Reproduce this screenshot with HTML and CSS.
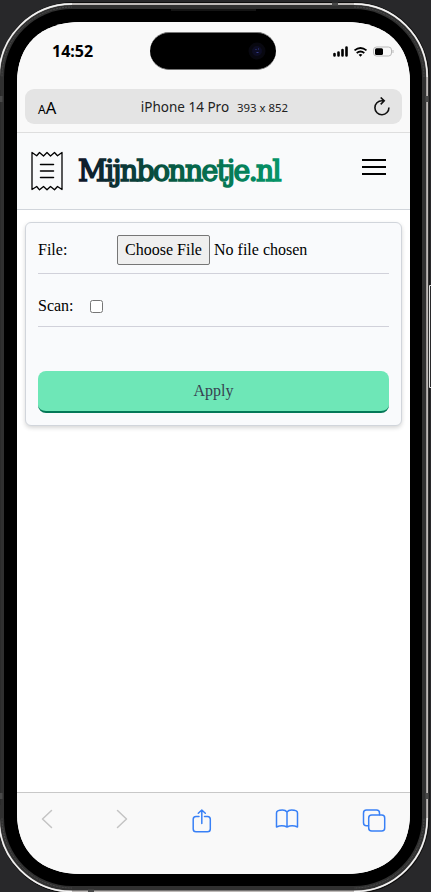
FILE: index.html
```
<!DOCTYPE html>
<html lang="en">
<head>
<meta charset="utf-8">
<title>Mijnbonnetje.nl</title>
<link rel="stylesheet" href="styles.css">
</head>
<body>
<svg class="frame" width="431" height="892" viewBox="0 0 431 892" fill="none" aria-hidden="true">
  <rect x="-2.5" y="2" width="432" height="892" rx="76" fill="#0d0d0d"/>
  <rect x="-1" y="4" width="428.2" height="887.5" rx="73" fill="#303030" stroke="#bdb9b7" stroke-width="2"/>
  <path d="M-1 77A73 73 0 0 1 72 4M354 4A73 73 0 0 1 427.200 77M427.200 818A73 73 0 0 1 354 891.500M72 891.500A73 73 0 0 1-1 818" stroke="#f4f4f4" stroke-width="1.300"/>
  <path d="M0 90V805" stroke="#2b2b2b" stroke-width="6"/>
  <rect x="2" y="7" width="422" height="881" rx="70" stroke="#555" stroke-width=".7" stroke-dasharray="2 1"/>
  <path d="M72 7H354M424 77V818M354 888H72M2 818V77" stroke="#303030" stroke-width="2"/>
  <rect x="4" y="9" width="418" height="877" rx="68" fill="#000"/>
  <path d="M171 10H256" stroke="#292929"/>
  <path d="M332 4H338M88 891H94M427 96V102M427 793V799M1 96V102M1 793V799" stroke="#494949" stroke-width="3"/>
  <path d="M432 285.500H429.500V387.500H432" stroke="#ddd"/>
</svg>
<main class="screen">
  <header class="browser">
    <div class="status">
      <span class="time">14:52</span>
      <span class="island"><svg width="18" height="18" viewBox="0 0 18 18"><circle cx="9" cy="9" r="8.500" fill="#080810"/><circle cx="9" cy="9" r="5" fill="#0d0d24"/><path d="M7.500 7.500h1M10 7h1M8.500 10.500h2" stroke="#343d88" stroke-width="1.100"/></svg></span>
      <svg class="signals" width="62" height="14" viewBox="0 0 62 14" fill="none">
        <path d="M2.500 9v1.500M6.500 7.500v3M10.500 5v5.500M14.500 2.500v8" stroke="#000" stroke-width="2.600" stroke-linecap="round"/>
        <path d="M22.500 5.400Q28.500.600 34.500 5.400M24.700 8Q28.500 4.900 32.300 8" stroke="#000" stroke-width="1.800"/>
        <path d="M26.600 9.700Q28.500 8.300 30.400 9.700L28.500 11.700Z" fill="#000"/>
        <rect x="41.500" y="2" width="18" height="9" rx="3" stroke="#b9b9b9"/>
        <rect x="43" y="3.200" width="8" height="6.700" rx="1.500" fill="#000"/>
        <path d="M61 5v3" stroke="#b9b9b9"/>
      </svg>
    </div>
    <div class="address">
      <span class="aa"><small>A</small>A</span>
      <span class="device">iPhone 14 Pro<span class="size">393 x 852</span></span>
      <svg class="reload" width="18" height="20" viewBox="0 0 18 20" fill="none" stroke="#111" stroke-width="1.600"><path d="M15.900 10.500A7 7 0 1 1 8.900 3.700H11M7.700.5L11.200 3.800L7.700 7.400"/></svg>
    </div>
  </header>
  <nav class="site">
    <svg class="receipt" width="34" height="42" viewBox="0 0 34 42" fill="none" stroke="#000" stroke-width="1.300" stroke-linejoin="round" stroke-linecap="round"><path d="M2 2.500L6.700 5.700L9.500 2.500L13.500 6L17 2.500L20.500 6L24.500 2.500L27.500 5.700L32 2.500V39.500L27.500 36.500L24.500 39.800L20.500 36.500L17 39.800L13.500 36.500L9.500 39.800L6.700 36.500L2 39.500Z"/><path d="M10.500 14.500h13M10.500 21h13M10.500 27.500h13" stroke-width="1.500"/></svg>
    <svg class="logo" width="216" height="52" viewBox="0 0 216 52"><defs><linearGradient id="brand"><stop stop-color="#0f172a"/><stop offset=".5" stop-color="#065f46"/><stop offset="1" stop-color="#059669"/></linearGradient></defs><text x="1" y="31" textLength="202" lengthAdjust="spacingAndGlyphs" fill="url(#brand)" stroke="url(#brand)">Mijnbonnetje.nl</text></svg>
    <svg class="menu" width="24" height="18" viewBox="0 0 24 18" stroke="#000" stroke-width="2"><path d="M0 2h24M0 9h24M0 16h24"/></svg>
  </nav>
  <form class="card">
    <div class="row file"><span class="label">File:</span><button type="button" class="choose">Choose File</button><span>No file chosen</span></div>
    <div class="row scan"><label for="scan">Scan:</label><input id="scan" type="checkbox"></div>
    <button type="button" class="apply">Apply</button>
  </form>
  <footer class="toolbar">
    <svg width="12" height="20" viewBox="0 0 12 20"><path d="M10.500 1.500L1.500 10L10.500 18.500"/></svg>
    <svg width="12" height="20" viewBox="0 0 12 20"><path d="M1.500 1.500L10.500 10L1.500 18.500"/></svg>
    <svg width="20" height="26" viewBox="0 0 20 26"><path d="M7 7.500H4Q1.200 7.500 1.200 10.300V20Q1.200 22.800 4 22.800H15.500Q18.300 22.800 18.300 20V10.300Q18.300 7.500 15.500 7.500H12.500M9.800 14.500V1.200M6.300 4.200L9.800 1L13.300 4.200"/></svg>
    <svg width="24" height="20" viewBox="0 0 24 20"><path d="M12 3Q10.500 1 7.500 1Q1.500 1 1.500 4V18Q7 15.500 12 18Q17 15.500 22.500 18V4Q22.500 1 16.500 1Q13.500 1 12 3V18"/></svg>
    <svg width="24" height="24" viewBox="0 0 24 24"><path d="M6.500 16.800H4.500Q1.500 16.800 1.500 13.800V4Q1.500 1 4.500 1H14.500Q17.500 1 17.500 4V5.800"/><rect x="6.700" y="6" width="16" height="16" rx="3"/></svg>
  </footer>
</main>
</body>
</html>
```
FILE: styles.css
```
* { box-sizing: border-box; }
body {
  margin: 0;
  width: 431px;
  height: 892px;
  overflow: hidden;
  padding: 22px 21px 18px 17px;
  background: #28282a;
  font: 16px "Liberation Serif", serif;
  color: #000;
}
.frame { position: absolute; left: 0; top: 0; }
svg { display: block; flex: none; }
.screen {
  position: relative;
  display: flex;
  flex-direction: column;
  width: 393px;
  height: 852px;
  background: #fff;
  clip-path: path("M0 61C0 23 23 0 65 0H328C370 0 393 23 393 61V791C393 829 370 852 328 852H65C23 852 0 829 0 791Z");
}
.browser {
  height: 111px;
  padding: 0 8px;
  background: #f9f9f9;
  border-bottom: 1px solid #dedede;
  font-family: "Noto Sans", sans-serif;
}
.status {
  display: grid;
  grid-template-columns: 125px 125px 1fr;
  height: 67px;
  padding-top: 10px;
  align-items: start;
}
.time { padding: 7px 0 0 27px; font-size: 16px; line-height: 24px; font-weight: 700; }
.island {
  display: flex;
  align-items: center;
  justify-content: flex-end;
  width: 126px;
  height: 38px;
  padding-right: 10px;
  border: 1px solid #777;
  border-width: 1px 0;
  border-radius: 19px;
  background: #000;
}
.signals { margin: 13px 0 0 57px; }
.address {
  display: grid;
  grid-template-columns: 60px 1fr 60px;
  align-items: center;
  height: 35px;
  padding: 0 11px 0 13px;
  border-radius: 9px;
  background: #e4e4e4;
}
.aa { font-size: 16.500px; line-height: 20px; padding-top: 4px; }
.aa small { font-size: 12px; }
.device { text-align: center; font-size: 13.500px; white-space: nowrap; color: #222; }
.size { margin-left: 8px; font-size: 11.400px; }
.reload { justify-self: end; }
.site {
  display: flex;
  align-items: flex-start;
  height: 77px;
  padding: 17px 24px 0 13px;
  background: #f9fafb;
  border-bottom: 1px solid #d1d5db;
}
.logo { margin-left: 13px; }
.logo text { font: 29px "DejaVu Serif Condensed", "DejaVu Serif", serif; letter-spacing: -1.500px; stroke-width: 1.500px; }
.menu { margin: 8px 0 0 auto; }
.card {
  display: flex;
  flex-direction: column;
  height: 204px;
  margin: 12px 8px 0;
  padding: 12px;
  border: 1px solid #d1d5db;
  border-radius: 6px;
  background: #f9fafc;
  box-shadow: 0 2px 4px rgba(0, 0, 0, .16);
}
.row { display: flex; border-bottom: 1px solid #d1d1da; }
.file { height: 39px; line-height: 30px; }
.label { width: 79px; }
.choose {
  width: 93px;
  height: 30px;
  margin-right: 4px;
  padding: 0;
  border: 1px solid #767676;
  border-radius: 2px;
  background: #efefef;
  color: #000;
  font: inherit;
  line-height: 28px;
}
.scan { height: 53px; padding-top: 22px; line-height: 19px; }
.scan input { width: 13px; height: 13px; margin: 4px 0 0 16px; }
.apply {
  height: 42px;
  margin-top: 44px;
  padding: 0;
  border: 0;
  border-bottom: 2px solid #047857;
  border-radius: 8px;
  background: #6ee7b7;
  color: #374151;
  font: inherit;
}
.toolbar {
  display: flex;
  justify-content: space-between;
  align-items: flex-start;
  height: 82px;
  margin-top: auto;
  padding: 16px 24px 0;
  background: #f9f9f9;
  border-top: 1px solid #c8c8c8;
}
.toolbar svg { fill: none; stroke: #3880f6; stroke-width: 1.500; stroke-linecap: round; stroke-linejoin: round; }
.toolbar svg:nth-child(-n+2) { stroke: #c4c4c4; }
```
